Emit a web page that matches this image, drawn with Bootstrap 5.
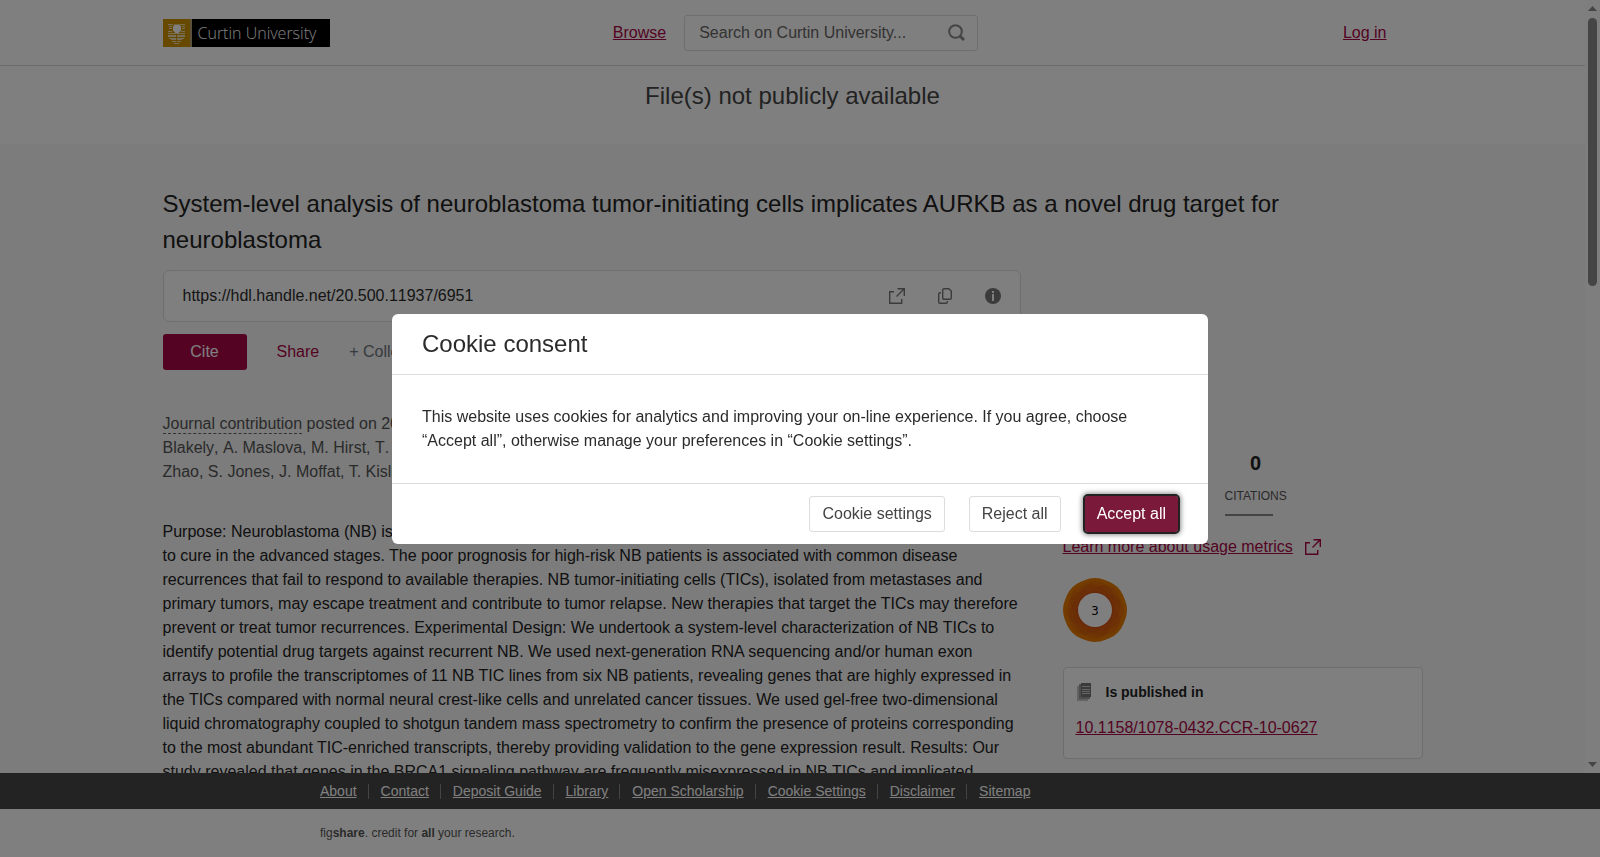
<!DOCTYPE html>
<html lang="en">
<head>
<meta charset="utf-8">
<meta name="viewport" content="width=device-width, initial-scale=1">
<title>System-level analysis of neuroblastoma tumor-initiating cells</title>
<link rel="stylesheet" href="https://cdn.jsdelivr.net/npm/bootstrap@5.3.0/dist/css/bootstrap.min.css">
<style>
  :root { --brand: #a90645; --ink: #2b2b2b; --soft: #555; --rule: #dcdcdc; }
  body { font-family: "Liberation Sans", Arial, sans-serif; font-size: 16px; line-height: 24px; color: var(--ink); }
  a { color: var(--brand); text-decoration: underline; }
  .unkerned { font-kerning: none; }
  .page-wrap { width: 100%; max-width: 1260px; margin: 0 auto; }
  .top-bar { border-bottom: 1px solid #d8d8d8; height: 66px; }
  .side { flex: 1 1 0; }
  .top-mid { gap: 18px; padding-left: 6px; }
  .login-link { margin-right: 36px; }
  .brand-logo { display: flex; height: 28px; width: 167px; background: #000; }
  .brand-logo svg { display: block; }
  .brand-name { font-family: "Open Sans", "Noto Sans", sans-serif; font-weight: 300; font-size: 16px; line-height: 28px; color: #fff; }
  .search-box { width: 294px; height: 36px; border: 1px solid var(--rule); border-radius: 3px; padding: 0 12px 0 14px; }
  .search-box input { border: 0; outline: 0; background: none; padding: 0; color: #666; }
  .search-box input::placeholder { color: #666; opacity: 1; }
  .icon-btn { border: 0; background: none; padding: 0; line-height: 0; color: #777; }
  .notice { font-size: 24px; line-height: 36px; color: #444; padding: 12px 0 30px; }
  .item-area { background: #f8f8f8; padding-top: 42px; }
  .item-title { font-size: 24px; line-height: 36px; font-weight: 400; margin-bottom: 12px; color: #222; }
  .main-col { flex: 0 1 858px; min-width: 0; }
  .aside-col { flex: 0 0 360px; padding-top: 181px; }
  .handle-box { height: 52px; border: 1px solid var(--rule); border-radius: 6px; background: #fff; padding: 0 19px; gap: 32px; }
  .cite-btn { width: 84px; height: 36px; border: 0; border-radius: 3px; background: var(--brand); color: #fff; }
  .item-actions { gap: 30px; margin-top: 12px; }
  .flat-btn { border: 0; background: none; padding: 0; line-height: 36px; }
  .share-btn { color: var(--brand); }
  .meta-line { color: var(--soft); margin: 42px 0 36px; white-space: nowrap; }
  .item-kind { border-bottom: 1px dashed #666; line-height: 18px; display: inline-block; }
  .abstract { color: #222; margin: 0; }
  .stats { display: grid; grid-template-columns: 42px 72px 62px; gap: 24px; text-align: center; }
  .stat-num { font-size: 20px; font-weight: 700; line-height: 24px; color: #222; }
  .stat-tag { font-size: 12px; line-height: 18px; margin-top: 12px; color: var(--soft); }
  .stat-rule { width: 48px; height: 2px; background: #888; margin-top: 9px; }
  .learn-row { margin-top: 19px; gap: 12px; }
  .score { display: block; margin: 19px 0 25px; }
  .pub-card { border: 1px solid var(--rule); border-radius: 4px; background: #fff; padding: 12px 12px 18px; height: 92px; }
  .pub-head { font-size: 14px; line-height: 24px; font-weight: 700; color: #222; gap: 14px; margin-bottom: 12px; }
  .scroll-rail { flex: 0 0 15px; background: #fcfcfc; padding: 6px 3px; }
  .scroll-thumb { width: 9px; height: 268px; border-radius: 5px; background: #8b8b8b; margin-top: 7px; }
  .foot-links { background: #464646; }
  .foot-wrap { width: 100%; max-width: 960px; margin: 0 auto; }
  .foot-links ul { font-size: 14px; line-height: 36px; }
  .foot-links a { color: #fff; }
  .foot-links li + li { display: flex; align-items: center; }
  .foot-links li + li::before { content: ""; width: 1px; height: 15px; background: #888; margin: 0 12px 0 11px; }
  .foot-credit { font-size: 12px; line-height: 48px; color: var(--soft); }
  .modal { --bs-modal-width: 816px; }
  .modal-content { border: 0; border-radius: 6px; color: var(--ink); }
  .modal-header { padding: 12px 30px; border-color: var(--rule); height: 61px; }
  .modal-title { font-size: 24px; line-height: 36px; font-weight: 400; }
  .modal-body { padding: 30px; }
  .modal-footer { padding: 12px 30px; gap: 24px; border-color: var(--rule); }
  .modal-footer > * { margin: 0; }
  .ask-btn { height: 36px; padding: 0 12px; border: 1px solid var(--rule); border-radius: 3px; background: #fff; color: #444; }
  .ask-main { border: 0; background: #7b193b; color: #fff; outline: 2px solid #222; box-shadow: 0 0 5px 3px rgba(0,0,0,.45); }
</style>
</head>
<body class="vh-100 d-flex flex-column overflow-hidden bg-white">
<div class="d-flex flex-grow-1 overflow-hidden">
  <div class="flex-grow-1 overflow-hidden">
    <header class="top-bar d-flex align-items-center">
      <div class="page-wrap d-flex align-items-center">
        <div class="side">
          <a href="#" class="brand-logo text-decoration-none" aria-label="Curtin University">
            <svg width="35" height="28" viewBox="0 0 35 28" aria-hidden="true">
              <path fill="#cf9500" d="M0 0h27v28H0z"/><path fill="#b5a27a" d="M27 0h2v28h-2z"/>
              <path fill="#fff" opacity=".7" d="M5 5h5v1H5zM17 5h5v1h-5zM6 7h3v1H6zM19 7h3v1h-3zM6 9h3v1H6zM19 9h3v1h-3zM5 12h4v1H5zM18 12h4v1h-4zM5 14h8v1H5zM14 14h8v1h-8zM5 16h8v2H5zM14 16h8v2h-8zM6 19h7v1H6zM14 19h7v1h-7zM8 20h5v1H8zM14 20h5v1h-5zM9 22h4v1H9zM14 22h4v1h-4zM11 24h5v1h-5z"/>
              <path fill="#fff" d="M11.500 5.500h5l1.500 2v4l-3 3h-2l-3-3v-4z"/>
            </svg>
            <span class="brand-name">Curtin University</span>
          </a>
        </div>
        <div class="top-mid d-flex align-items-center">
          <a href="#">Browse</a>
          <form class="search-box d-flex align-items-center" role="search">
            <input class="flex-grow-1" type="text" aria-label="Search" placeholder="Search on Curtin University...">
            <button class="icon-btn" type="button" aria-label="Submit search">
              <svg width="17" height="17" viewBox="0 0 17 17" fill="none" stroke="#888" stroke-width="2"><circle cx="7.500" cy="7.500" r="6.300"/><path stroke-width="3" d="M12 12l4 4"/></svg>
            </button>
          </form>
        </div>
        <div class="side text-end"><a href="#" class="login-link">Log in</a></div>
      </div>
    </header>
    <div class="notice text-center">File(s) not publicly available</div>
    <main class="item-area">
      <div class="page-wrap">
        <h1 class="item-title">System-level analysis of neuroblastoma tumor-initiating cells implicates AURKB as a novel drug target for neuroblastoma</h1>
        <div class="d-flex justify-content-between">
          <div class="main-col">
            <div class="handle-box d-flex align-items-center">
              <span class="flex-grow-1 unkerned">https://hdl.handle.net/20.500.11937/6951</span>
              <button class="icon-btn" type="button" aria-label="Open link"><svg width="16" height="16" viewBox="0 0 16 16" fill="none" stroke="currentColor" stroke-width="1.400"><path d="M5 3.700H.7v11.600h12V11M8.500.7h6.800V8M15 1L7.500 8.500"/></svg></button>
              <button class="icon-btn" type="button" aria-label="Copy link"><svg width="16" height="16" viewBox="0 0 16 16" fill="none" stroke="currentColor" stroke-width="1.400"><path d="M7 .7h4.800L14.300 3v7a1.300 1.300 0 0 1-1.300 1.300H7A1.300 1.300 0 0 1 5.700 10V2A1.300 1.300 0 0 1 7 .7zM4 4.700H3A1.300 1.300 0 0 0 1.700 6v8A1.300 1.300 0 0 0 3 15.300h6a1.300 1.300 0 0 0 1.300-1.300v-1"/></svg></button>
              <button class="icon-btn" type="button" aria-label="Information"><svg width="16" height="16" viewBox="0 0 16 16"><circle cx="8" cy="8" r="8" fill="currentColor"/><path fill="#fff" d="M7 3h2v2H7zM7 6h2v7H7z"/></svg></button>
            </div>
            <div class="item-actions d-flex">
              <button type="button" class="cite-btn">Cite</button>
              <button type="button" class="flat-btn share-btn">Share</button>
              <button type="button" class="flat-btn text-secondary">+ Collect</button>
            </div>
            <p class="meta-line"><span class="item-kind">Journal contribution</span> posted on 2017-01-30, 12:00 authored by O. Morozova, M. Vojvodic<br><span class="unkerned">Blakely, A. Maslova, M. Hirst, T. Cezard, R. Morin, R. Moore, K. Smith</span><br>Zhao, S. Jones, J. Moffat, T. Kislinger, R. Moran, D. Kaplan</p>
            <p class="abstract">Purpose: Neuroblastoma (NB) is an aggressive tumor of the developing peripheral nervous system that remains difficult to cure in the advanced stages. The poor prognosis for high-risk NB patients is associated with common disease recurrences that fail to respond to available therapies. NB tumor-initiating cells (TICs), isolated from metastases and primary tumors, may escape treatment and contribute to tumor relapse. New therapies that target the TICs may therefore prevent or treat tumor recurrences. Experimental Design: We undertook a system-level characterization of NB TICs to identify potential drug targets against recurrent NB. We used next-generation RNA sequencing and/or human exon arrays to profile the transcriptomes of 11 NB TIC lines from six NB patients, revealing genes that are highly expressed in the TICs compared with normal neural crest-like cells and unrelated cancer tissues. We used gel-free two-dimensional liquid chromatography coupled to shotgun tandem mass spectrometry to confirm the presence of proteins corresponding to the most abundant TIC-enriched transcripts, thereby providing validation to the gene expression result. Results: Our study revealed that genes in the BRCA1 signaling pathway are frequently misexpressed in NB TICs and implicated</p>
          </div>
          <aside class="aside-col">
            <div class="stats">
              <div><div class="stat-num">0</div><div class="stat-tag">VIEWS</div></div>
              <div><div class="stat-num">0</div><div class="stat-tag">SAVES</div></div>
              <div><div class="stat-num">0</div><div class="stat-tag">CITATIONS</div><div class="stat-rule"></div></div>
            </div>
            <div class="learn-row d-flex align-items-center">
              <a href="#">Learn more about usage metrics</a>
              <svg width="16" height="16" viewBox="0 0 16 16" fill="none" stroke="#a90645" stroke-width="1.400" aria-hidden="true"><path d="M5 3.700H.7v11.600h12V11M8.500.7h6.800V8M15 1L7.500 8.500"/></svg>
            </div>
            <svg class="score" width="64" height="64" viewBox="0 0 64 64" role="img" aria-label="Attention score 3">
              <defs>
                <circle id="lobe" cx="32" cy="26" r="26" fill="#e87a00"/>
                <path id="swirl" d="M31 3C48 5 56 18 51 36C47 48 36 52 30 50L32 14C30 12 20 12 16 20C17 10 23 4 31 3z" fill="#c8401e" fill-opacity=".22"/>
              </defs>
              <use href="#lobe"/><use href="#lobe" transform="rotate(45 32 32)"/><use href="#lobe" transform="rotate(90 32 32)"/><use href="#lobe" transform="rotate(135 32 32)"/><use href="#lobe" transform="rotate(180 32 32)"/><use href="#lobe" transform="rotate(225 32 32)"/><use href="#lobe" transform="rotate(270 32 32)"/><use href="#lobe" transform="rotate(315 32 32)"/>
              <use href="#swirl"/><use href="#swirl" transform="rotate(45 32 32)"/><use href="#swirl" transform="rotate(90 32 32)"/><use href="#swirl" transform="rotate(135 32 32)"/><use href="#swirl" transform="rotate(180 32 32)"/><use href="#swirl" transform="rotate(225 32 32)"/><use href="#swirl" transform="rotate(270 32 32)"/><use href="#swirl" transform="rotate(315 32 32)"/>
              <circle cx="32" cy="32" r="17" fill="#fff"/>
              <text x="32" y="37" text-anchor="middle" font-family="DejaVu Sans Condensed, DejaVu Sans, sans-serif" font-size="13" fill="#000">3</text>
            </svg>
            <div class="pub-card">
              <div class="pub-head d-flex align-items-center">
                <svg width="16" height="18" viewBox="0 0 16 18" aria-hidden="true"><path fill="#c4c4c4" d="M1 3h11v15H1z"/><path fill="#9a9a9a" d="M3 1h11v15H3z"/><path fill="#777" d="M5 0h10v14H5z"/><path stroke="#ccc" d="M6 3.500h8M6 6.500h8M6 8.500h8M6 10.500h8"/></svg>
                Is published in
              </div>
              <a href="#" class="unkerned">10.1158/1078-0432.CCR-10-0627</a>
            </div>
          </aside>
        </div>
      </div>
    </main>
  </div>
  <div class="scroll-rail d-flex flex-column justify-content-between" aria-hidden="true">
    <div>
      <svg class="d-block" width="9" height="5" viewBox="0 0 9 5"><path fill="#8b8b8b" d="M0 5L4.500 0 9 5z"/></svg>
      <div class="scroll-thumb"></div>
    </div>
    <svg class="d-block" width="9" height="5" viewBox="0 0 9 5"><path fill="#8b8b8b" d="M0 0h9L4.500 5z"/></svg>
  </div>
</div>
<footer class="flex-shrink-0">
  <nav class="foot-links" aria-label="Footer">
    <ul class="foot-wrap d-flex list-unstyled">
      <li><a href="#">About</a></li><li><a href="#">Contact</a></li><li><a href="#">Deposit Guide</a></li><li><a href="#">Library</a></li><li><a href="#">Open Scholarship</a></li><li><a href="#">Cookie Settings</a></li><li><a href="#">Disclaimer</a></li><li><a href="#">Sitemap</a></li>
    </ul>
  </nav>
  <div class="foot-wrap foot-credit">fig<b>share</b>. credit for <b>all</b> your research.</div>
</footer>

<div class="modal-backdrop show"></div>
<div class="modal show d-block" role="dialog" aria-modal="true" aria-labelledby="consentTitle">
  <div class="modal-dialog modal-dialog-centered">
    <div class="modal-content">
      <div class="modal-header"><h2 class="modal-title" id="consentTitle">Cookie consent</h2></div>
      <div class="modal-body">This website uses cookies for analytics and improving your on-line experience. If you agree, choose “Accept all”, otherwise manage your preferences in “Cookie settings”.</div>
      <div class="modal-footer">
        <button type="button" class="ask-btn">Cookie settings</button>
        <button type="button" class="ask-btn">Reject all</button>
        <button type="button" class="ask-btn ask-main">Accept all</button>
      </div>
    </div>
  </div>
</div>
<script src="https://cdn.jsdelivr.net/npm/bootstrap@5.3.0/dist/js/bootstrap.bundle.min.js"></script>
</body>
</html>
